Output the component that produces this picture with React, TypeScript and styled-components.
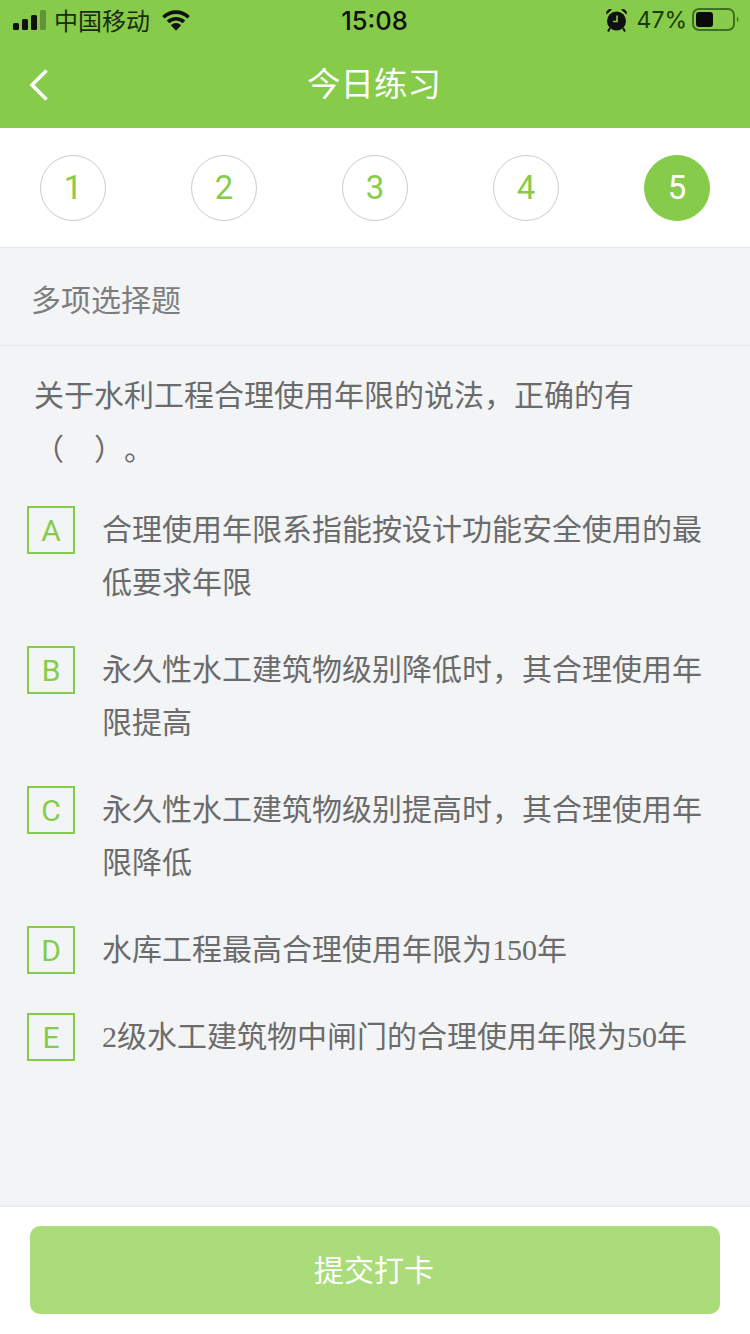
import React from "react";
import styled, { createGlobalStyle } from "styled-components";

const GlobalStyle = createGlobalStyle`
  html, body {
    margin: 0;
    padding: 0;
    background: #f2f4f6;
    font-family: "Noto Sans CJK SC", "Liberation Sans", sans-serif;
  }
`;

const Page = styled.div`
  width: 750px;
  height: 1334px;
  display: flex;
  flex-direction: column;
  overflow: hidden;
  background: #f2f4f6;
`;

const Header = styled.header`
  height: 128px;
  background: #86cc4a;
  display: flex;
  flex-direction: column;
`;

const StatusBar = styled.div`
  height: 40px;
  display: grid;
  grid-template-columns: 1fr auto 1fr;
  align-items: center;
  padding: 0 11px 0 13px;
  color: #111;
`;

const StatusLeft = styled.div`
  display: flex;
  align-items: center;
  gap: 7px;
`;

const Carrier = styled.span`
  font-size: 24px;
  line-height: 40px;
  margin-right: 5px;
  color: #1c2a12;
`;

const Clock = styled.span`
  font-family: Inter, "Liberation Sans", sans-serif;
  font-size: 25.5px;
  font-weight: 500;
  margin-right: 3px;
`;

const StatusRight = styled.div`
  display: flex;
  align-items: center;
  justify-content: flex-end;
  gap: 5px;
`;

const Percent = styled.span`
  font-family: Inter, "Liberation Sans", sans-serif;
  font-size: 23px;
  margin-left: 5px;
  color: #1c3a0c;
`;

const NavBar = styled.div`
  height: 88px;
  display: grid;
  grid-template-columns: 100px 1fr 100px;
  align-items: center;
`;

const BackButton = styled.div`
  display: flex;
  padding: 2px 0 0 29px;
`;

const Title = styled.h1`
  margin: 0;
  text-align: center;
  color: #fff;
  font-size: 33.5px;
  font-weight: 400;
  line-height: 84px;
  padding: 0 2px 4px 0;
`;

const Steps = styled.div`
  height: 119px;
  background: #fff;
  border-bottom: 1px solid #e6e6e6;
  display: flex;
  align-items: center;
  justify-content: space-between;
  padding: 0 40px;
  flex-shrink: 0;
`;

const Step = styled.div<{ $active?: boolean }>`
  width: 66px;
  height: 66px;
  box-sizing: border-box;
  border-radius: 50%;
  border: 1px solid ${(p) => (p.$active ? "#86cc4a" : "#cccccc")};
  background: ${(p) => (p.$active ? "#86cc4a" : "#fff")};
  color: ${(p) => (p.$active ? "#fff" : "#86cc4a")};
  font-family: Roboto, "Liberation Sans", sans-serif;
  font-size: 33px;
  display: flex;
  align-items: center;
  justify-content: center;
`;

const TypeLabel = styled.div`
  height: 98px;
  box-sizing: border-box;
  border-bottom: 1px solid #e6e8ea;
  padding: 3px 0 0 31px;
  display: flex;
  align-items: center;
  font-size: 30px;
  color: #7d7d7d;
  flex-shrink: 0;
`;

const Question = styled.p`
  margin: 0;
  padding: 20px 60px 0 34px;
  font-size: 30px;
  line-height: 54px;
  color: #6b6b6b;
  text-spacing-trim: space-all;
`;

const Options = styled.div`
  flex: 1;
  display: flex;
  flex-direction: column;
  gap: 34px;
  padding: 32px 47px 0 27px;
`;

const Option = styled.div`
  display: flex;
  align-items: flex-start;
  gap: 27px;
`;

const OptionBox = styled.div`
  width: 48px;
  height: 48px;
  box-sizing: border-box;
  border: 2px solid #86cc4a;
  color: #86cc4a;
  font-family: Roboto, "Liberation Sans", sans-serif;
  font-size: 30px;
  display: flex;
  align-items: center;
  justify-content: center;
  flex-shrink: 0;
`;

const OptionText = styled.div`
  font-size: 30px;
  line-height: 53px;
  color: #6b6b6b;
  margin: -5px 0 5px;
  text-spacing-trim: space-all;
`;

const Num = styled.span`
  font-family: "Liberation Serif", serif;
  line-height: 1;
`;

const Footer = styled.footer`
  height: 128px;
  box-sizing: border-box;
  background: #fff;
  border-top: 1px solid #e8eaec;
  padding: 19px 30px 0;
  flex-shrink: 0;
`;

const SubmitButton = styled.div`
  height: 88px;
  box-sizing: border-box;
  padding: 0 2px 4px 0;
  border-radius: 10px;
  background: #aadc7a;
  color: #fff;
  font-size: 30px;
  display: flex;
  align-items: center;
  justify-content: center;
`;

const SignalIcon = () => (
  <svg width="34" height="20" viewBox="0 0 34 20">
    <rect x="0" y="13" width="6" height="7" rx="1.5" fill="#111" />
    <rect x="9" y="9" width="6" height="11" rx="1.5" fill="#111" />
    <rect x="18" y="5" width="6" height="15" rx="1.5" fill="#111" />
    <rect x="27" y="0" width="6" height="20" rx="1.5" fill="#111" fillOpacity="0.3" />
  </svg>
);

const WifiIcon = () => (
  <svg width="28" height="21" viewBox="0 0 30 22">
    <path d="M1.5 7.5a19.5 19.5 0 0 1 27 0" fill="none" stroke="#111" strokeWidth="4" />
    <path d="M6.5 12.5a12.4 12.4 0 0 1 17 0" fill="none" stroke="#111" strokeWidth="4" />
    <path d="M9.5 16a8 8 0 0 1 11 0l-5.5 6z" fill="#111" />
  </svg>
);

const AlarmIcon = () => (
  <svg width="21" height="24" viewBox="0 0 21 24">
    <circle cx="10.5" cy="13" r="9.5" fill="#111" />
    <path d="M0.5 6.5a4 4 0 0 1 5.5-5zM20.5 6.5a4 4 0 0 0-5.5-5z" fill="#111" />
    <path d="M4 20l-2 3.5M17 20l2 3.5" stroke="#111" strokeWidth="2" />
    <path d="M11 7.5v6H7" fill="none" stroke="#86cc4a" strokeWidth="1.6" />
  </svg>
);

const BatteryIcon = () => (
  <svg width="47" height="24" viewBox="0 0 47 24">
    <rect x="1" y="1" width="41" height="21" rx="6" fill="none" stroke="#3f6f22" strokeWidth="2" />
    <rect x="4" y="4" width="17" height="15" rx="3" fill="#0a0a0a" />
    <path d="M45 8.5a4 4 0 0 1 0 6z" fill="#3f6f22" />
  </svg>
);

const BackIcon = () => (
  <svg width="20" height="34" viewBox="0 0 20 34">
    <path d="M17.5 2.5L3 17l14.5 14.5" fill="none" stroke="#fff" strokeWidth="3.6" />
  </svg>
);

const options: { key: string; text: React.ReactNode }[] = [
  { key: "A", text: "合理使用年限系指能按设计功能安全使用的最低要求年限" },
  { key: "B", text: "永久性水工建筑物级别降低时，其合理使用年限提高" },
  { key: "C", text: "永久性水工建筑物级别提高时，其合理使用年限降低" },
  { key: "D", text: <>水库工程最高合理使用年限为<Num>150</Num>年</> },
  { key: "E", text: <><Num>2</Num>级水工建筑物中闸门的合理使用年限为<Num>50</Num>年</> },
];

const App: React.FC = () => {
  return (
    <Page>
      <GlobalStyle />
      <Header>
        <StatusBar>
          <StatusLeft>
            <SignalIcon />
            <Carrier>中国移动</Carrier>
            <WifiIcon />
          </StatusLeft>
          <Clock>15:08</Clock>
          <StatusRight>
            <AlarmIcon />
            <Percent>47%</Percent>
            <BatteryIcon />
          </StatusRight>
        </StatusBar>
        <NavBar>
          <BackButton>
            <BackIcon />
          </BackButton>
          <Title>今日练习</Title>
        </NavBar>
      </Header>
      <Steps>
        {[1, 2, 3, 4, 5].map((n) => (
          <Step key={n} $active={n === 5}>{n}</Step>
        ))}
      </Steps>
      <TypeLabel>多项选择题</TypeLabel>
      <Question>关于水利工程合理使用年限的说法，正确的有（　）。</Question>
      <Options>
        {options.map((o) => (
          <Option key={o.key}>
            <OptionBox>{o.key}</OptionBox>
            <OptionText>{o.text}</OptionText>
          </Option>
        ))}
      </Options>
      <Footer>
        <SubmitButton>提交打卡</SubmitButton>
      </Footer>
    </Page>
  );
};

export default App;
